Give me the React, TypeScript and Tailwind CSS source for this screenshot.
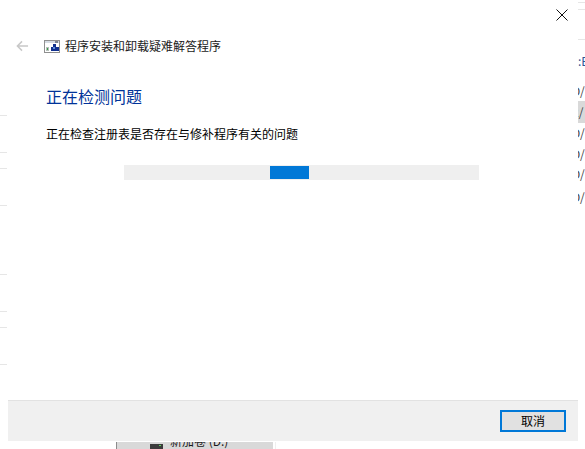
const font = "font-['Microsoft_YaHei','Noto_Sans_CJK_SC',sans-serif]"

function LeftEdge() {
  const tick = 'h-px bg-[#e6e6e6]'
  return (
    <div className="w-[7px] mr-px flex flex-col">
      <div className={`${tick} mt-[115px]`} />
      <div className={`${tick} mt-[36px]`} />
      <div className={`${tick} mt-[15px]`} />
      <div className={`${tick} mt-[36px]`} />
      <div className={`${tick} mt-[68px]`} />
      <div className={`${tick} mt-[36px]`} />
      <div className={`${tick} mt-[15px]`} />
      <div className={`${tick} mt-[36px]`} />
    </div>
  )
}

function RightEdge() {
  const row = 'h-[20px] leading-[20px] text-[12px] text-[#444] whitespace-nowrap'
  const cut = '-ml-[6px]'
  return (
    <div className="flex-1 flex flex-col overflow-hidden">
      <div className="h-px bg-[#e6e6e6] mt-[2px]" />
      <div className="h-px bg-[#e6e6e6] mt-[6px]" />
      <div className="h-px bg-[#e6e6e6] mt-[29px]" />
      <div className="h-[20px] leading-[20px] text-[12px] text-[#2b5797] whitespace-nowrap mt-[11px]">:E</div>
      <div className={`${row} mt-[10px]`}><span className={cut}>D/</span></div>
      <div className="h-[22px] leading-[22px] text-[12px] text-[#444] whitespace-nowrap bg-[#d9d9d9]"><span className={cut}>2/</span></div>
      <div className={row}><span className={cut}>D/</span></div>
      <div className={`${row} mt-px`}><span className={cut}>D/</span></div>
      <div className={row}><span className={cut}>D/</span></div>
      <div className={`${row} mt-[3px]`}><span className={cut}>D/</span></div>
    </div>
  )
}

function TroubleshooterIcon() {
  return (
    <svg width="16" height="13" viewBox="0 0 16 13" className="mr-[5px] shrink-0">
      <rect x="0.5" y="0.5" width="15" height="12" fill="#fff" stroke="#8f8f8f" />
      <rect x="1" y="1" width="14" height="2" fill="#d5dbe3" />
      <rect x="11" y="1" width="3" height="2" fill="#7d8490" />
      <rect x="2" y="7" width="3" height="4" fill="#b4bfb8" />
      <rect x="3" y="8" width="1" height="2" fill="#3a9a4a" />
      <path d="M7 10V7h2V4h3v3h3v4H7z" fill="#10308f" />
      <rect x="9" y="7" width="2" height="2" fill="#5f8fd8" />
    </svg>
  )
}

export default function App() {
  return (
    <div className={`w-[585px] h-[449px] flex flex-col overflow-hidden bg-white ${font}`}>
      <div className="h-[441px] flex shrink-0">
        <LeftEdge />

        <div className="w-[570px] flex flex-col">
          <div className="h-[32px] flex justify-end items-start pt-[9px] pr-[10px]">
            <svg width="12" height="12" viewBox="0 0 12 12" className="stroke-[#111]" fill="none">
              <path d="M.5.5l11 11M11.5.5l-11 11" />
            </svg>
          </div>

          <div className="h-[28px] flex items-center">
            <svg width="13" height="12" viewBox="0 0 14 12" fill="none" className="ml-[8px] mr-[15px] stroke-[#c8c8c8] shrink-0" strokeWidth="1.6">
              <path d="M13 6H1.5M6.5 1l-5 5 5 5" />
            </svg>
            <TroubleshooterIcon />
            <span className="text-[12px] text-[#1a1a1a] leading-[16px]">程序安装和卸载疑难解答程序</span>
          </div>

          <h1 className="ml-[38px] mt-[24px] text-[16px] leading-[24px] font-normal text-[#003399]">正在检测问题</h1>
          <p className="ml-[38px] mt-[18px] text-[12px] leading-[16px] text-[#000]">正在检查注册表是否存在与修补程序有关的问题</p>

          <div className="ml-[116px] mt-[23px] w-[355px] h-[15px] bg-[#efefef] flex items-center pl-[146px]">
            <div className="w-[39px] h-[13px] bg-[#0078d7]" />
          </div>

          <div className="mt-auto h-[41px] border-t border-[#e2e2e2] bg-[#f0f0f0] flex justify-end items-start pt-[9px] pr-[12px]">
            <button className="w-[66px] h-[22px] border-2 border-[#0078d7] bg-[#e1e1e1] text-[12px] leading-[16px] text-[#000]">取消</button>
          </div>
        </div>

        <RightEdge />
      </div>

      <div className="h-[8px] flex pl-[116px] overflow-hidden">
        <div className="w-[157px] h-[7px] mt-px bg-[#d9d9d9] border-l border-[#8c8c8c] flex items-start overflow-hidden">
          <svg width="13" height="6" viewBox="0 0 13 6" className="ml-[33px] mt-[2px] shrink-0">
            <rect width="13" height="6" fill="#3c3c3c" />
            <rect x="9" y="1" width="2" height="1" fill="#5fd35f" />
          </svg>
          <span className="ml-[7px] -mt-[9px] text-[12px] leading-[16px] text-[#1a1a1a] whitespace-nowrap">新加卷 (D:)</span>
        </div>
        <div className="w-px h-[7px] mt-px ml-[2px] bg-[#efefef]" />
      </div>
    </div>
  )
}
